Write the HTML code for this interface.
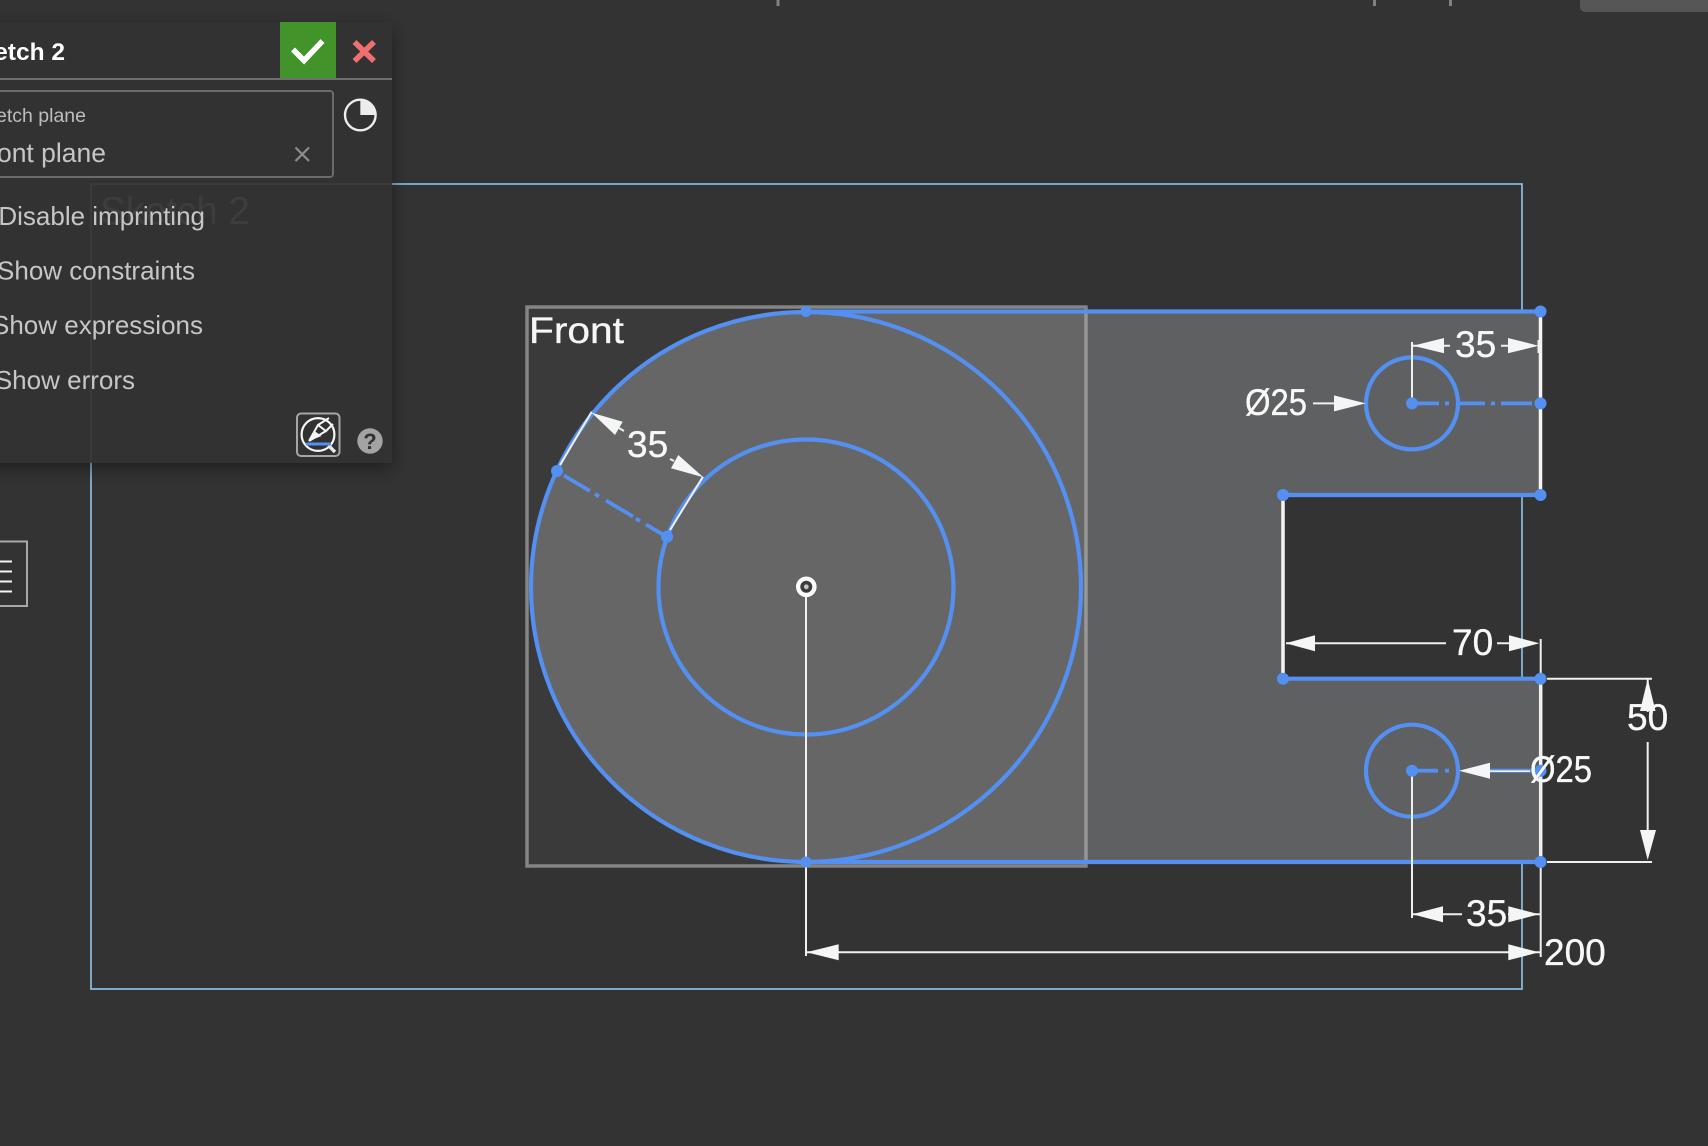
<!DOCTYPE html>
<html lang="en">
<head>
<meta charset="utf-8">
<title>Sketch 2</title>
<style>
html,body{margin:0;padding:0;width:1708px;height:1146px;overflow:hidden;background:#333}
svg{display:block;position:absolute;left:0;top:0}
text{font-family:"Liberation Sans",sans-serif}
.d{fill:#f8f8f8;font-size:37px;stroke:#f8f8f8;stroke-width:.35}
.m{fill:#c6c6c6;font-size:26px;text-anchor:end}
.w2{stroke:#f0f0f0;stroke-width:2;fill:none}
.w3{stroke:#f4f4f4;stroke-width:3.5;fill:none}
.b{stroke:#5390f1;stroke-width:4.2;fill:none}
.a{fill:#f4f5f6}
.p{fill:#5390f1}
</style>
</head>
<body>
<svg width="1708" height="1146" viewBox="0 0 1708 1146" xmlns="http://www.w3.org/2000/svg">
<defs>
<filter id="sh" x="-10%" y="-10%" width="125%" height="125%">
<feDropShadow dx="0" dy="6" stdDeviation="9" flood-color="#000" flood-opacity=".4"/>
</filter>
<clipPath id="plane"><rect x="527" y="307" width="559" height="559"/></clipPath>
</defs>

<!-- top remnants -->
<rect x="776.5" y="0" width="3" height="6" fill="#808080"/>
<rect x="1373" y="0" width="3" height="6" fill="#808080"/>
<rect x="1449" y="0" width="3" height="6" fill="#808080"/>
<path d="M1580 0H1708V12H1585a5 5 0 0 1-5-5Z" fill="#565656"/>

<!-- sketch frame -->
<rect x="91" y="184" width="1431" height="805" fill="none" stroke="#86b5d8" stroke-width="1.8"/>

<!-- plane -->
<rect x="527" y="307" width="559" height="559" fill="#3a3a3a"/>

<!-- filled region -->
<path d="M806 311.5H1540.5V495H1283V678.7H1540.5V862H806Z" fill="#5f6061"/>
<circle cx="806" cy="587" r="275" fill="#5f6061"/>
<g clip-path="url(#plane)">
<path d="M806 311.5H1540.5V495H1283V678.7H1540.5V862H806Z" fill="#666"/>
<circle cx="806" cy="587" r="275" fill="#666"/>
</g>
<rect x="527" y="307" width="559" height="559" fill="none" stroke="rgba(185,185,185,.6)" stroke-width="3.5"/>
<text x="529" y="343" style="font-size:37.5px;stroke:#f6f6f6;stroke-width:.35" fill="#f6f6f6" textLength="95" lengthAdjust="spacingAndGlyphs">Front</text>

<!-- white outline segments -->
<path class="w3" d="M1540.5 311.5V495M1283 495V678.7"/>
<path d="M1540.7 678.7V862" stroke="#f0f0f0" stroke-width="3.5" fill="none"/>

<!-- blue geometry -->
<circle class="b" cx="806" cy="587" r="275"/>
<circle class="b" cx="806" cy="587" r="147.5"/>
<circle class="b" cx="1412" cy="403.4" r="46" />
<circle class="b" cx="1412" cy="770.7" r="46" />
<path class="b" d="M806 311.5H1540.5M1283 495H1540.5M1283 678.7H1540.5M806 862H1540.5"/>

<!-- construction lines -->
<g stroke="#5390f1" stroke-width="3.8" fill="none">
<path d="M564 475.5L590 491M595 494L599 496.5M606 500.5L633 516.5M636 518.5L640 521M646 524.5L667 537"/>
<path d="M1412 403.4H1439M1445 403.4H1449M1459 403.4H1485M1491 403.4H1495M1501 403.4H1532"/>
<path d="M1412 770.7H1438M1445 770.7H1449M1490 770.7H1540"/>
</g>

<!-- thin dimension lines -->
<path class="w2" d="M560 465L591.7 411.7M670 530L703 476.7"/>
<path d="M619 428L624 431M674 461L670 459" stroke="#f0f0f0" stroke-width="2"/>
<path class="w2" d="M1412 342V403M1413 345.7H1450M1501 345.7H1510M1538.5 340V353"/>
<path class="w2" d="M1313 403.4H1336"/>
<path class="w2" d="M1286 643.3H1446M1497 643.3H1512M1540.7 639V678"/>
<path class="w2" d="M1547 678.7H1652M1547 862H1652M1647.7 679V712M1647.7 742V832"/>
<path d="M1490 771.2H1530" stroke="#f0f0f0" stroke-width="1.6"/>
<path class="w2" d="M1412 773V918M1412 914.3H1462M1508 914.3H1540M1540.7 862V957"/>
<path class="w2" d="M806 597V956M806 952.3H1540"/>

<!-- arrowheads -->
<g class="a">
<polygon points="591.7,412.7 622.7,421.7 615,435"/>
<polygon points="703.3,477.3 678.3,455 671,468.3"/>
<polygon points="1413,345.7 1444,338 1444,353.3"/>
<polygon points="1538.5,345.7 1508,338 1508,353.3"/>
<polygon points="1365.7,403.4 1334,395.4 1334,411.4"/>
<polygon points="1285.7,643.3 1315,635.3 1315,651.3"/>
<polygon points="1539.3,643.3 1509,635.3 1509,651.3"/>
<polygon points="1647.7,679 1640,711 1655.5,711"/>
<polygon points="1647.7,860 1640,830 1656,830"/>
<polygon points="1459,770.7 1490,762.7 1490,778.7"/>
<polygon points="1412.3,914.3 1443,906.3 1443,922.3"/>
<polygon points="1539,914.3 1508.3,906.3 1508.3,922.3"/>
<polygon points="1539,952.3 1508.3,944.3 1508.3,960.3"/>
<polygon points="806.5,952.3 838.7,944.3 838.7,960.3"/>
</g>

<!-- points -->
<g class="p">
<circle cx="806" cy="311.5" r="5.5"/>
<circle cx="1540.5" cy="311.5" r="6"/>
<circle cx="1540.5" cy="403.4" r="6"/>
<circle cx="1540.5" cy="495" r="6"/>
<circle cx="1283" cy="495" r="6"/>
<circle cx="1283" cy="678.7" r="6"/>
<circle cx="1540.5" cy="678.7" r="6"/>
<circle cx="1540.5" cy="862" r="6"/>
<circle cx="806" cy="862" r="5.5"/>
<circle cx="557" cy="471" r="6"/>
<circle cx="667" cy="536.7" r="6"/>
<circle cx="1412" cy="403.4" r="6"/>
<circle cx="1412" cy="770.7" r="6"/>
<circle cx="1540.5" cy="770.7" r="6"/>
</g>

<!-- origin -->
<circle cx="806.3" cy="586.8" r="10.3" fill="#fff"/>
<circle cx="806.3" cy="586.8" r="6" fill="#3c3c3c"/>
<circle cx="806.3" cy="586.8" r="2.4" fill="#c4c4c4"/>

<!-- dimension labels -->
<text class="d" x="627" y="457">35</text>
<text class="d" x="1455" y="357">35</text>
<text class="d" x="1245" y="415" textLength="62" lengthAdjust="spacingAndGlyphs">Ø25</text>
<text class="d" x="1452" y="655">70</text>
<text class="d" x="1627" y="730">50</text>
<text class="d" x="1530" y="782" textLength="62" lengthAdjust="spacingAndGlyphs">Ø25</text>
<text class="d" x="1466" y="926">35</text>
<text class="d" x="1544" y="965">200</text>

<!-- side box -->
<path d="M0 541.5H27V606H0" fill="none" stroke="#a8a8a8" stroke-width="2"/>
<path d="M0 561.5H12M0 571.5H12M0 581.5H12M0 591.5H12" stroke="#f4f4f4" stroke-width="2"/>

<!-- panel -->
<rect x="-30" y="22" width="422" height="441" fill="#323232" filter="url(#sh)"/>
<path d="M91 463V184H392" fill="none" stroke="#3c3c3c" stroke-width="1.8"/>
<text x="100" y="224" style="font-size:38.5px" fill="#3d3d3d">Sketch 2</text>

<!-- header -->
<text x="65" y="60" text-anchor="end" style="font-size:24.5px;font-weight:700" fill="#fff">Sketch 2</text>
<rect x="0" y="78" width="392" height="2" fill="#6f6f6f"/>
<rect x="280" y="22" width="56" height="56" fill="#43932b"/>
<path d="M293 49.5L304 60.5L322.5 41" fill="none" stroke="#fff" stroke-width="5.5"/>
<path d="M354.5 42L374 61M374 42L354.5 61" fill="none" stroke="#ef7070" stroke-width="5.5"/>

<!-- field -->
<rect x="-20" y="91" width="353" height="86" rx="3" fill="none" stroke="#6b6b6b" stroke-width="2"/>
<text x="86" y="122" text-anchor="end" style="font-size:19.5px" fill="#bdbdbd">Sketch plane</text>
<text x="106" y="162" text-anchor="end" style="font-size:26.5px" fill="#c6c6c6">Front plane</text>
<path d="M295.5 147.5L309 161M309 147.5L295.5 161" stroke="#8d8d8d" stroke-width="2.2" fill="none"/>
<circle cx="360.3" cy="115" r="15.3" fill="none" stroke="#ededed" stroke-width="2.4"/>
<path d="M360.3 115V99.7A15.3 15.3 0 0 1 375.6 115Z" fill="#ececec"/>

<!-- menu -->
<text class="m" x="205" y="225">Disable imprinting</text>
<text class="m" x="195" y="279.5">Show constraints</text>
<text class="m" x="203" y="334">Show expressions</text>
<text class="m" x="135" y="389">Show errors</text>

<!-- footer icons -->
<rect x="297" y="413.5" width="42.5" height="42.5" rx="4" fill="none" stroke="#a5a5a5" stroke-width="2"/>
<circle cx="318" cy="434.5" r="16.4" fill="none" stroke="#f6f6f6" stroke-width="2.2"/>
<path d="M329.5 446.5L335 452" stroke="#e8e8e8" stroke-width="3.4"/>
<path d="M309 441L318 425L329 418M318 425L326 431L333 424M309 441L326 431" fill="none" stroke="#f6f6f6" stroke-width="2"/>
<path d="M309 441L314.5 431L321.5 436Z" fill="#f6f6f6"/>
<path d="M306 444H331" stroke="#5390f1" stroke-width="3"/>
<circle cx="370" cy="441" r="12.7" fill="#a3a3a3"/>
<text x="370" y="449" text-anchor="middle" style="font-size:22px;font-weight:700" fill="#323232">?</text>
</svg>
</body>
</html>
